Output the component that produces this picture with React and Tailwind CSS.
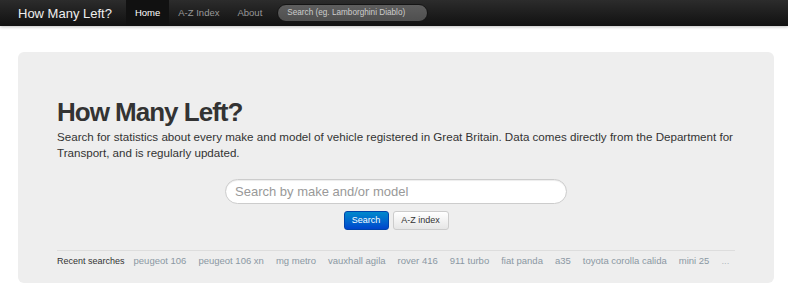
import React from 'react';

const recent = [
  'peugeot 106',
  'peugeot 106 xn',
  'mg metro',
  'vauxhall agila',
  'rover 416',
  '911 turbo',
  'fiat panda',
  'a35',
  'toyota corolla calida',
  'mini 25',
];

function Navbar() {
  return (
    <div className="h-[26px] bg-gradient-to-b from-[#2c2c2c] to-[#111111] shadow-[0_1px_3px_rgba(0,0,0,0.25)] flex items-stretch">
      <a className="ml-[18px] mr-[14px] flex items-center text-[13px] text-[#eeeeee] leading-none">
        How Many Left?
      </a>
      <ul className="flex items-stretch text-[9.5px]">
        <li className="px-[9px] flex items-center bg-[#111111] text-white">Home</li>
        <li className="px-[9px] flex items-center text-[#999999]">A-Z Index</li>
        <li className="px-[9px] flex items-center text-[#999999]">About</li>
      </ul>
      <div className="flex items-center ml-[6px]">
        <div className="w-[151px] h-[18px] rounded-full bg-gradient-to-b from-[#5e5e5e] to-[#4f4f4f] border border-[#151515] flex items-center pl-[9px] text-[8.2px] text-[#cccccc] whitespace-nowrap">
          Search (eg. Lamborghini Diablo)
        </div>
      </div>
    </div>
  );
}

function Hero() {
  return (
    <div className="ml-[18px] mr-[14px] mt-[26px] bg-[#eeeeee] rounded-[6px] px-[39px] pt-[47px] pb-[15px]">
      <h1 className="text-[26px] font-bold leading-[26px] tracking-[-1px] text-[#333333]">
        How Many Left?
      </h1>
      <p className="mt-[4px] text-[11.6px] leading-[16px] text-[#333333]">
        Search for statistics about every make and model of vehicle registered in Great Britain. Data comes directly from the Department for Transport, and is regularly updated.
      </p>
      <div className="mt-[18px] flex flex-col items-center">
        <div className="w-[342px] h-[25px] rounded-full bg-white border border-[#cccccc] shadow-[inset_0_1px_1px_rgba(0,0,0,0.075)] flex items-center pl-[9px] text-[13px] text-[#999999]">
          Search by make and/or model
        </div>
        <div className="mt-[7px] flex gap-[4px]">
          <button className="w-[45px] h-[19px] rounded-[3px] bg-gradient-to-b from-[#0088cc] to-[#0044cc] border border-[#0044aa] text-white text-[9px] flex items-center justify-center">
            Search
          </button>
          <button className="w-[56px] h-[19px] rounded-[3px] bg-gradient-to-b from-white to-[#e6e6e6] border border-[#cccccc] text-[#333333] text-[9px] flex items-center justify-center">
            A-Z index
          </button>
        </div>
      </div>
      <div className="mt-[20px] border-t border-[#dddddd]" />
      <div className="mt-[3px] h-[14px] flex items-center leading-[14px] whitespace-nowrap">
        <span className="text-[9px] text-[#333333] mr-[3px]">Recent searches</span>
        {recent.map((r) => (
          <a key={r} className="px-[6px] text-[9.5px] text-[#8b98a3]">
            {r}
          </a>
        ))}
        <span className="px-[6px] text-[9.5px] text-[#b0b8bf]">...</span>
      </div>
    </div>
  );
}

export default function App() {
  return (
    <div className="min-h-[292px] bg-white font-['Liberation_Sans',Arial,sans-serif]">
      <Navbar />
      <Hero />
    </div>
  );
}
